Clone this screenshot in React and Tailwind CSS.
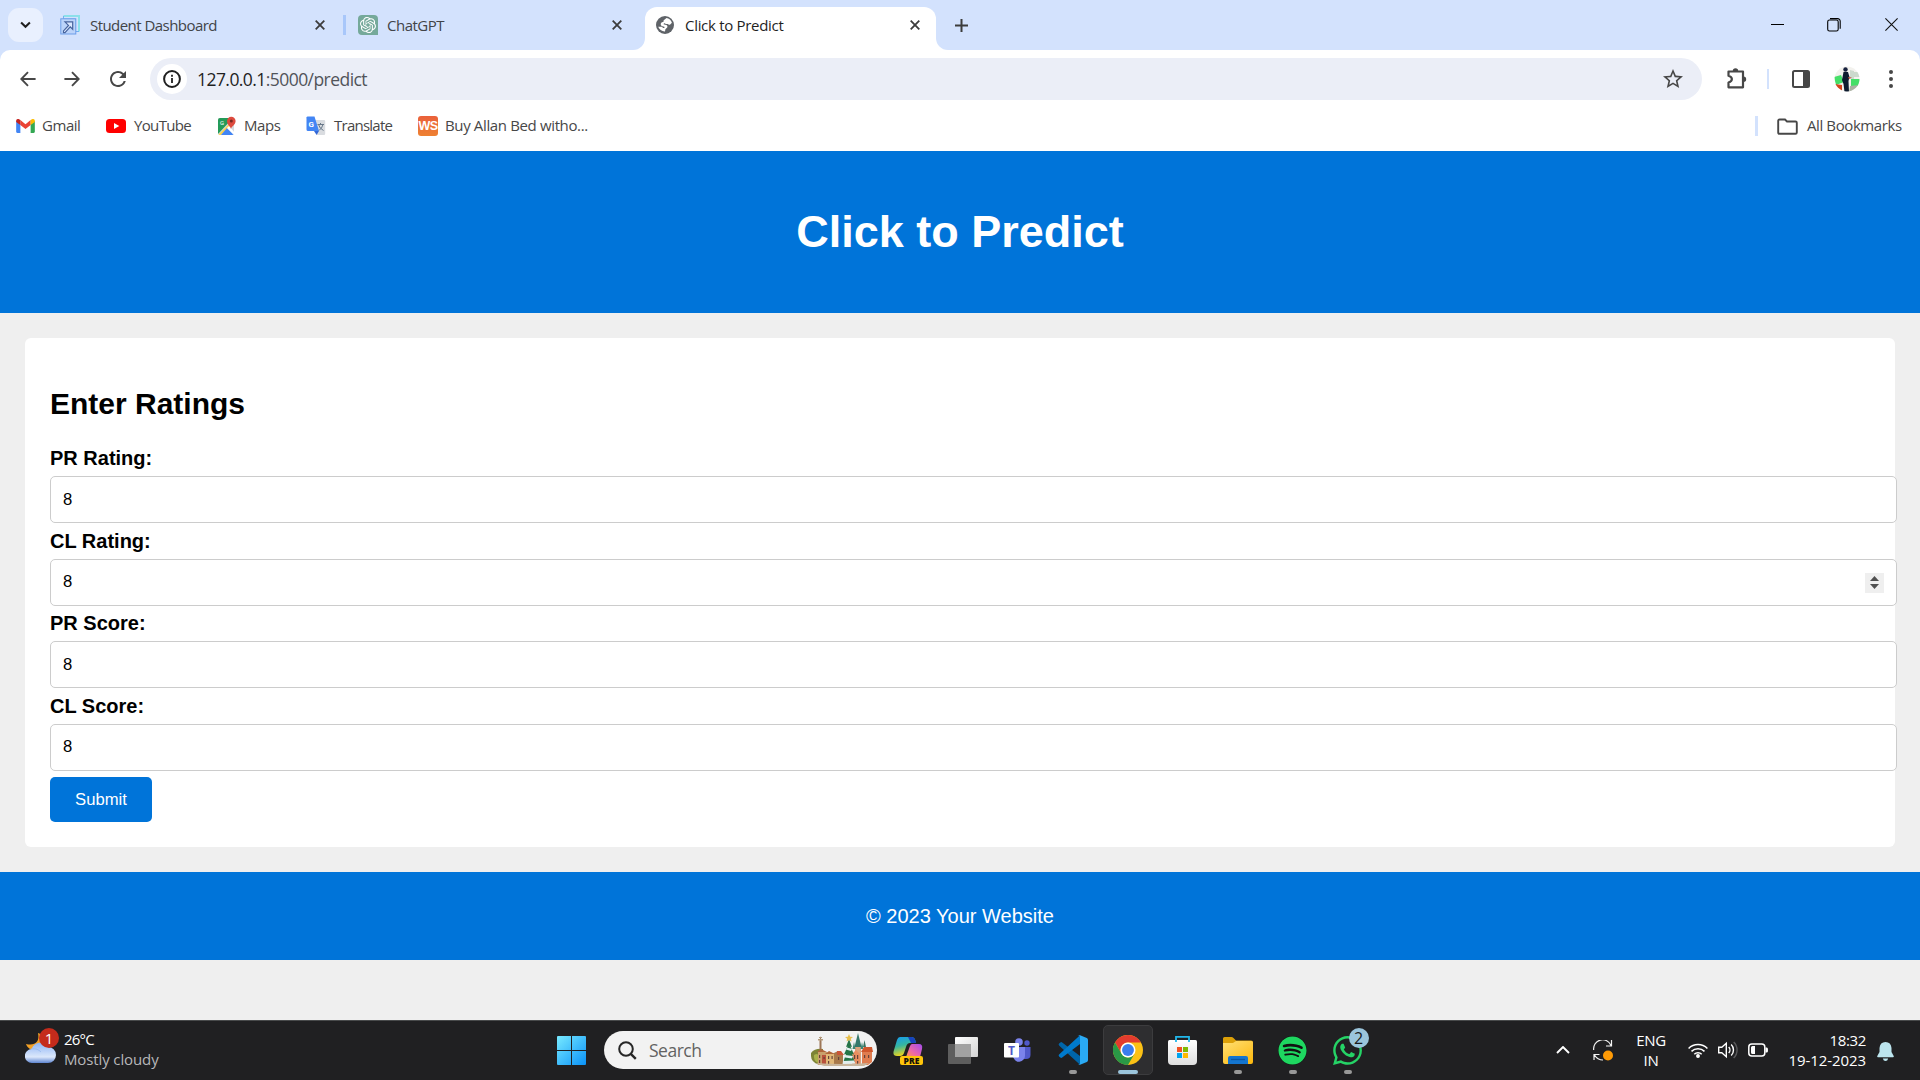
import React from "react";
import { SiOpenai } from "react-icons/si";
import { FaSpotify, FaWhatsapp } from "react-icons/fa";
import { MdStarBorder, MdRefresh } from "react-icons/md";

const ui = "font-['Open_Sans','Noto_Sans',sans-serif] whitespace-nowrap";

const Close = ({ className = "" }) => (
  <svg viewBox="0 0 10 10" className={"h-[10px] w-[10px] shrink-0 " + className}>
    <path d="M.7.7l8.6 8.6M9.3.7L.7 9.3" stroke="#3c3c3c" strokeWidth="1.8" fill="none" />
  </svg>
);

const Globe = () => (
  <svg viewBox="0 0 18 18" className="h-[18px] w-[18px] shrink-0">
    <circle cx="9" cy="9" r="9" fill="#5f6368" />
    <path d="M10.500 2c2.500.4 4.700 2.200 5.400 4.800l-1.700 1.700c-.7.5-1.900.3-2.500-.4l-2-.1c-.3-.8-1.200-1-1.800-.6-.4.300-.2 1 .4 1.100l2 .4c1.300.5 1.500 2 .6 2.900l-1.500 1.400-.4 2.200c-2.900.2-5.900-1.900-6.800-4.700h3.500c.8 0 1.100.6 1 1.300h1.300c.7-.1.800-.9.200-1.200l-2.300-.8c-1.200-.6-1.500-1.900-.8-3 .5-.8 1.400-1 2.300-1l.2-1.500c.3-.8 1.700-1.100 2.900-2.500z" fill="#fff" />
  </svg>
);

function TabStrip() {
  return (
    <div className="flex h-[50px] bg-[#d3e2fd]">
      <div className="ml-2 mt-2 flex h-[34px] w-[35px] items-center justify-center rounded-[11px] bg-[#e9f0fe]">
        <svg viewBox="0 0 12 8" className="h-[8px] w-[11px]"><path d="M1.2 1.2L6 6l4.800-4.800" fill="none" stroke="#1f1f1f" strokeWidth="2.200" /></svg>
      </div>
      <div className="flex w-[300px] items-center pl-[17px]">
        <svg viewBox="0 0 20 20" className="h-5 w-5 shrink-0">
          <path d="M3.500 1h15.500v15.500" fill="none" stroke="#8be0ea" strokeWidth="2" />
          <path d="M3.500 1v3h12v12.500H19" fill="none" stroke="#73aef0" strokeWidth="1" />
          <rect x=".8" y="3.800" width="15" height="15.200" fill="#bcd4fa" stroke="#6c9de9" />
          <path d="M5 6.800h7.700v7.500l-2.500-2.400-5.200 5.700H3.500v-1.700l5-5.500z" fill="#d9e7ff" stroke="#46639d" strokeWidth="1.200" />
        </svg>
        <span className={ui + " ml-[10px] w-[225px] shrink-0 text-[15px] tracking-[-0.55px] text-[#414448]"}>Student Dashboard</span>
        <Close />
      </div>
      <div className="mt-[15px] h-5 w-[3px] bg-[#a8c7fa]" />
      <div className="flex w-[299px] items-center pl-[12px]">
        <span className="flex h-5 w-5 shrink-0 items-center justify-center rounded-[4px] rounded-br-none bg-[#75a99a] text-white"><SiOpenai size={16} /></span>
        <span className={ui + " ml-[9px] w-[225px] shrink-0 text-[15px] tracking-[-0.5px] text-[#414448]"}>ChatGPT</span>
        <Close />
      </div>
      <div className="relative mt-[7px] flex h-[43px] w-[291px] items-center rounded-t-[12px] bg-white pb-[7px] pl-[11px]">
        <span className="absolute -left-3 bottom-0 h-3 w-3 bg-white"><span className="block h-3 w-3 rounded-br-[12px] bg-[#d3e2fd]" /></span>
        <span className="absolute -right-3 bottom-0 h-3 w-3 bg-white"><span className="block h-3 w-3 rounded-bl-[12px] bg-[#d3e2fd]" /></span>
        <Globe />
        <span className={ui + " ml-[11px] w-[225px] shrink-0 text-[15px] tracking-[-0.3px] text-[#1f1f1f]"}>Click to Predict</span>
        <Close />
      </div>
      <svg viewBox="0 0 13 13" className="ml-[19px] mt-[19px] h-[13px] w-[13px]"><path d="M6.500 0v13M0 6.500h13" stroke="#3c3c3c" strokeWidth="2" /></svg>
      <div className="ml-auto mr-[22px] flex h-[49px] items-center">
        <span className="mr-[43px] h-px w-[13px] bg-black" />
        <svg viewBox="0 0 14 14" className="mr-[44px] h-[14px] w-[14px]" fill="none" stroke="black"><rect x=".7" y="2" width="10.500" height="11" rx="1.800" strokeWidth="1.100" /><path d="M3 .6h7.500a2.600 2.600 0 0 1 2.700 2.700v7.500" strokeWidth="1.100" /></svg>
        <svg viewBox="0 0 13 13" className="h-[13px] w-[13px]"><path d="M.4.4l12.200 12.200M12.600.4L.4 12.600" stroke="#111" strokeWidth="1.100" /></svg>
      </div>
    </div>
  );
}

function Toolbar() {
  return (
    <div className="bg-[#d3e2fd]">
      <div className="flex h-[58px] items-center rounded-t-[10px] bg-white">
        <svg viewBox="0 0 16 16" className="ml-[20px] h-[16px] w-[16px]" fill="none" stroke="#474747" strokeWidth="1.900"><path d="M15.600 8H1.500M8 1.200L1.300 8 8 14.800" /></svg>
        <svg viewBox="0 0 16 16" className="ml-[28px] h-[16px] w-[16px]" fill="none" stroke="#474747" strokeWidth="1.900"><path d="M.4 8h14.100M8 1.200L14.700 8 8 14.800" /></svg>
        <MdRefresh size={24} className="ml-[26px] text-[#474747]" />
        <div className="ml-[20px] flex h-[42px] w-[1552px] items-center rounded-full bg-[#ebeef7] pl-[7px] pr-[17px]">
          <span className="flex h-[30px] w-[30px] items-center justify-center rounded-full bg-white">
            <svg viewBox="0 0 18 18" className="h-[18px] w-[18px]"><circle cx="9" cy="9" r="7.900" fill="none" stroke="#1f1f1f" strokeWidth="2" /><path d="M9 8v5M9 4.800v2" stroke="#1f1f1f" strokeWidth="1.800" /></svg>
          </span>
          <span className={ui + " ml-[10px] text-[17.500px] tracking-[-0.56px] text-[#1f1f1f]"}>127.0.0.1<span className="text-[#51545a]">:5000/predict</span></span>
          <MdStarBorder size={24} className="ml-auto text-[#474747]" />
        </div>
        <svg viewBox="0 0 22 22" className="ml-[23px] h-[22px] w-[22px]">
          <path d="M3.500 3.500h14.500v15.800H3.500v-4.700c4.500-1.600 4.500-5.500 0-6.800z" fill="none" stroke="#474747" strokeWidth="2.200" strokeLinejoin="round" />
          <path d="M7.800 3a2.700 2.700 0 0 1 5.400 0M18.500 8.500a2.700 2.700 0 0 1 0 5.400" fill="#474747" />
        </svg>
        <span className="ml-[20px] h-5 w-[2px] bg-[#d3e2fd]" />
        <svg viewBox="0 0 18 18" className="ml-[23px] h-[18px] w-[18px]"><rect x="1" y="1" width="16" height="16" rx="1.500" fill="none" stroke="#474747" strokeWidth="2" /><path d="M11 1h6v16h-6z" fill="#474747" /></svg>
        <svg viewBox="0 0 26 26" className="ml-[24px] h-[26px] w-[26px]">
          <clipPath id="face"><circle cx="13" cy="13" r="12.500" /></clipPath>
          <g clipPath="url(#face)">
            <path d="M0 0h26v26H0z" fill="#f3f2ee" />
            <path d="M0 11l7-2 3 7-8 3zM17 13h9v7h-9z" fill="#45df68" />
            <path d="M16 4l4 1v8h-4zM20 6h6v5h-6z" fill="#ccd9cd" />
            <path d="M1 18l7 1v7H5z" fill="#d4451c" /><path d="M16 20l9-1-4 7h-6z" fill="#aab1a3" />
            <circle cx="11.500" cy="3.500" r="2.200" fill="#17213e" /><path d="M9.500 6h4.500l1.500 5-1 4 .5 11h-4.500l-1-8-1.500-4z" fill="#0d1b2f" /><path d="M14 11l4 0.500-3 1.500z" fill="#c1563e" />
          </g>
        </svg>
        <svg viewBox="0 0 4 18" className="ml-[29px] h-[18px] w-[4px]" fill="#474747"><circle cx="2" cy="2" r="2" /><circle cx="2" cy="9" r="2" /><circle cx="2" cy="16" r="2" /></svg>
      </div>
    </div>
  );
}

function Bookmarks() {
  const label = ui + " relative -top-px text-[15px] text-[#474747]";
  return (
    <div className="flex h-[43px] items-center bg-white pb-[7px]">
      <div className="flex w-[90px] items-center pl-[16px]">
        <svg viewBox="0 0 20 15" className="h-[14px] w-[19px] shrink-0">
          <path d="M0 2v11.700c0 .7.600 1.300 1.300 1.300h3.200V5z" fill="#4285f4" /><path d="M15.500 5v10h3.200c.7 0 1.300-.6 1.300-1.300V2z" fill="#34a853" />
          <path d="M4.500 1.200L10 5.500l5.500-4.300v5.300L10 10.800 4.500 6.500z" fill="#ea4335" /><path d="M0 2C0 0 2.200-.6 3.600.5l.9.700v5.300L0 3.200z" fill="#c5221f" /><path d="M20 2c0-2-2.200-2.600-3.600-1.500l-.9.700v5.300L20 3.200z" fill="#fbbc04" />
        </svg>
        <span className={label + " ml-[7px] tracking-[-0.45px]"}>Gmail</span>
      </div>
      <div className="flex w-[127px] items-center pl-[16px]">
        <svg viewBox="0 0 20 14" className="h-[14px] w-5 shrink-0"><rect width="20" height="14" rx="3.500" fill="red" /><path d="M8 4l5.300 3L8 10z" fill="#fff" /></svg>
        <span className={label + " ml-[8px] tracking-[-0.65px]"}>YouTube</span>
      </div>
      <div className="flex w-[89px] items-center">
        <svg viewBox="0 0 20 20" className="h-5 w-5 shrink-0">
          <clipPath id="map"><rect x="1" y="2" width="16" height="17" rx="2" /></clipPath>
          <g clipPath="url(#map)"><path d="M0 0h20v20H0z" fill="#d6dade" /><path d="M1 2h15L1 18z" fill="#249b58" /><path d="M1 19L16 4v3L4 19z" fill="#fbd24b" /><path d="M4 19l6-7 7 7z" fill="#4285f4" /><path d="M10 12l8 8v-3l-6-7z" fill="#fff" /></g>
          <text x="3" y="8.500" fontSize="6" fontFamily="Roboto" fill="#fff">G</text>
          <path d="M14 13c-.4-3-4-4-4-8a4.300 4.300 0 0 1 8.600 0c0 4-4.200 5-4.600 8z" fill="#dd4b3e" /><circle cx="14.300" cy="5" r="1.500" fill="#782820" />
        </svg>
        <span className={label + " ml-[7px] tracking-[-0.45px]"}>Maps</span>
      </div>
      <div className="flex w-[111px] items-center">
        <svg viewBox="0 0 20 20" className="h-5 w-5 shrink-0">
          <path d="M8 4h10a1.200 1.200 0 0 1 1.200 1.200v12.500A1.300 1.300 0 0 1 18 19H11z" fill="#d9dce0" /><path d="M1.500.5h7L13 15H2A1.500 1.500 0 0 1 .5 13.500v-11A1.500 1.500 0 0 1 1.500.5z" fill="#4285f4" /><path d="M8 15h5l-2.400 4z" fill="#3367d6" />
          <text x="2.500" y="10.500" fontSize="8" fontFamily="Roboto" fontWeight="700" fill="#fff">G</text>
          <path d="M11.500 8.500h6.500M14.500 7v1.500M12.500 8.500q1 4 5 6M17 8.500q-1 4-4 6" fill="none" stroke="#69798a" />
        </svg>
        <span className={label + " ml-[8px] tracking-[-0.75px]"}>Translate</span>
      </div>
      <span className="ml-[1px] flex h-5 w-5 items-center justify-center rounded-[3px] bg-gradient-to-b from-[#ea603a] to-[#ee8132] font-['Liberation_Sans',sans-serif] text-[12.500px] font-bold tracking-[-0.6px] text-white">WS</span>
      <span className={label + " ml-[7px] tracking-[-0.36px]"}>Buy Allan Bed witho...</span>
      <span className="ml-auto h-5 w-[3px] bg-[#d3e2fd]" />
      <svg viewBox="0 0 21 17" className="ml-[19px] h-[17px] w-[21px]"><path d="M2.500 1.500H8l2 2h8.500q1.300 0 1.300 1.300v9.700q0 1.300-1.300 1.300h-16q-1.300 0-1.300-1.300V2.800q0-1.300 1.300-1.300z" fill="none" stroke="#474747" strokeWidth="1.900" /></svg>
      <span className={label + " ml-[9px] mr-[19px] w-[94px] tracking-[-0.4px]"}>All Bookmarks</span>
    </div>
  );
}

function Field({ label, spinner, className = "", inputClass = "" }) {
  return (
    <label className={"flex h-[83px] flex-col " + className}>
      <span className="h-[30px] pt-px text-[20px] font-bold leading-[23px]">{label}</span>
      <span className="flex h-[47px] w-[1847px] shrink-0 items-center rounded-[5px] border border-[#ccc] bg-white pl-[12px] pr-[12px]">
        <input defaultValue="8" className={"min-w-0 flex-1 bg-transparent text-[16.670px] leading-[20px] text-black outline-none " + inputClass} />
        {spinner && (
          <span className="flex h-5 w-[19px] flex-col items-center justify-center gap-[3px] bg-[#efefef]">
            <svg viewBox="0 0 9 5" className="h-[5px] w-[9px]"><path d="M0 5L4.500 0 9 5z" fill="#505050" /></svg>
            <svg viewBox="0 0 9 5" className="h-[5px] w-[9px]"><path d="M0 0l4.500 5L9 0z" fill="#505050" /></svg>
          </span>
        )}
      </span>
    </label>
  );
}

function Page() {
  return (
    <main className="flex h-[869px] flex-col overflow-hidden bg-[#efefef] font-['Liberation_Sans',Arial,sans-serif] text-black">
      <header className="flex h-[162px] shrink-0 items-center justify-center bg-[#0074d9]"><h1 className="text-[45px] font-bold leading-[52px] text-white">Click to Predict</h1></header>
      <section className="m-[25px] h-[509px] shrink-0 rounded-[6px] bg-white px-[25px] pt-[48px]">
        <h2 className="h-[60px] text-[30px] font-bold leading-[35px]">Enter Ratings</h2>
        <Field label="PR Rating:" />
        <Field label="CL Rating:" spinner className="-mb-px" inputClass="pb-[2px]" />
        <Field label="PR Score:" />
        <Field label="CL Score:" inputClass="pb-[2px]" />
        <button className="h-[45px] w-[102px] rounded-[5px] bg-[#0074d9] text-[16.670px] text-white">Submit</button>
      </section>
      <footer className="flex h-[88px] shrink-0 items-center justify-center bg-[#0074d9] text-[20px] text-white">© 2023 Your Website</footer>
    </main>
  );
}

function Cell({ children, dot, active }) {
  return (
    <div className="flex w-[55px] justify-center">
      <div className={"relative mt-[4px] flex h-[50px] w-[50px] items-center justify-center rounded-[5px] " + (active ? "border border-[#3c3c3e] bg-[#2e2e30]" : "")}>
        {children}
        {dot && <span className="absolute bottom-[1px] left-[21px] h-1 w-2 rounded-full bg-[#989898]" />}
        {active && <span className="absolute bottom-0 left-[14px] h-1 w-5 rounded-full bg-[#9bc5dc]" />}
      </div>
    </div>
  );
}

function City() {
  return (
    <svg viewBox="0 0 64 34" className="h-[34px] w-[64px]">
      <path d="M1 20q4-5 12-4v16H9Q1 29 1 23z" fill="#7d8436" /><path d="M4 22q4-3 6 2l-2 6q-5-3-4-8" fill="#abb24b" />
      <path d="M9.500 20V8l1-5 1 5v12z" fill="#9c7657" /><path d="M8 6h5v1.500H8zM9 4h3v1H9z" fill="#b39a7a" />
      <path d="M8 19h9v13H8z" fill="#c9a06c" /><path d="M16 20h9v12h-9z" fill="#e0b777" /><path d="M7 19l4-3 6 3zM15 21l4-3 6 3z" fill="#b0653a" />
      <path d="M24 20l4-2 5 4v11h-9z" fill="#a8794a" /><path d="M27 18h4l3 4h-7z" fill="#c95637" /><path d="M12 22h4v10h-4z" fill="#b9513b" />
      <path d="M45 14h6v18h-6z" fill="#dba27c" /><path d="M44.500 14L48 0l3.500 14z" fill="#34786b" /><path d="M42.500 16l1.500-7 1.500 7zM50.500 16L52 9l1.500 7z" fill="#3d8675" />
      <path d="M52 19h10v10l-4 3h-6z" fill="#df7d50" /><path d="M51 19l3-5h8l1 5z" fill="#d0572c" /><path d="M53 14l1.500-7L56 14z" fill="#397461" />
      <path d="M42 21l4-4 4 4v11h-8z" fill="#e88e60" />
      <path d="M39 6l3 8-1.500-.5 3.500 8-2-.5 3 9H33l3-9-2 .5 3.500-8-1.500.5z" fill="#247447" /><path d="M37 14.500l5 1.500-1 2-5-1.500zM35 22l8 1-1 2.500-7-1zM33 28l11-.5 1.500 3-13 1z" fill="#e3eeee" />
      <path d="M39 1l1.200 2.700 2.800.2-2.200 1.800.8 2.900-2.600-1.600-2.500 1.600.7-2.900L35 3.900l2.800-.2z" fill="#e6be4b" />
      <path d="M9 22h1.200v3H9zM9 27h1.200v3H9zM13.500 24h1.200v2h-1.200zM18 23h1.200v3H18zM21.500 23h1.200v3h-1.200zM18 28h1.200v3H18zM28 24h1.200v3H28zM44 22h1.200v4H44zM47 22h1.200v4H47zM54 22h1.200v3H54zM58 22h1.200v3H58zM47 28h1.200v4H47z" fill="#66433a" />
      <path d="M5 30q27 2 54 0l-5 3H14z" fill="#c9b69d" />
    </svg>
  );
}

function Taskbar() {
  return (
    <div className="flex h-[60px] border-t border-[#484a4b] bg-[#202022]">
      <div className="flex w-[557px] items-start pl-[25px]">
        <div className="relative mt-[6px] h-[38px] w-[34px]">
          <svg viewBox="0 0 34 38" className="h-[38px] w-[34px]">
            <defs><linearGradient id="cl" x2="0" y2="1"><stop stopColor="#8db4f5" /><stop offset=".7" stopColor="#dce8fb" /><stop offset="1" stopColor="#5e85d1" /></linearGradient></defs>
            <path d="M13 6c2 9-3 13-12 11 2 6 9 8 15 5s8-12-3-16z" fill="#f3a126" />
            <path d="M7 36a7 7 0 0 1-.3-14A9 9 0 0 1 23 20a8 8 0 0 1 0 16z" fill="url(#cl)" />
            <path d="M6 22c5-1 8 1 10 3" fill="none" stroke="#9bbcf0" />
          </svg>
          <span className={ui + " absolute left-[14px] top-[1px] flex h-5 w-5 items-center justify-center rounded-full bg-[#c42b1c] text-[15px] leading-none text-white"}>1</span>
        </div>
        <div className={ui + " ml-[5px] mt-[8px] text-[15px] leading-[20px]"}>
          <div className="tracking-[-0.8px] text-white">26°C</div><div className="tracking-[-0.12px] text-[#b7b7b9]">Mostly cloudy</div>
        </div>
      </div>
      <svg viewBox="0 0 29 29" className="mt-[15px] h-[29px] w-[29px]">
        <defs><linearGradient id="win" x2="1" y2="1"><stop stopColor="#78eaff" /><stop offset="1" stopColor="#0a92f8" /></linearGradient></defs>
        <path d="M1 0h13v14H0V1q0-1 1-1zM15 0h13q1 0 1 1v13H15zM0 15h14v14H1q-1 0-1-1zM15 15h14v13q0 1-1 1H15z" fill="url(#win)" />
      </svg>
      <div className="ml-[18px] mt-[10px] flex h-[38px] w-[273px] items-center rounded-full bg-[#f2f2f2] pl-[14px]">
        <svg viewBox="0 0 19 19" className="h-[19px] w-[19px]" fill="none" stroke="#262626" strokeWidth="2"><circle cx="8" cy="8" r="6.800" /><path d="M12.800 12.800l5 5" strokeWidth="2.400" /></svg>
        <span className={ui + " ml-[12px] text-[17.500px] tracking-[-0.5px] text-[#626262]"}>Search</span>
        <span className="ml-auto mr-[3px]"><City /></span>
      </div>
      <div className="ml-[3px] flex">
        <Cell>
          <svg viewBox="0 0 30 30" className="h-[30px] w-[30px]">
            <defs><linearGradient id="ca" x2=".3" y2="1"><stop stopColor="#159cf2" /><stop offset=".5" stopColor="#35b5a1" /><stop offset="1" stopColor="#efd51a" /></linearGradient><linearGradient id="cb" x1="1" x2="0" y2="1"><stop stopColor="#a44bef" /><stop offset=".6" stopColor="#ee68a6" /><stop offset="1" stopColor="#ff9b45" /></linearGradient></defs>
            <path d="M7 2h12q3 0 4 6h-6q-3 0-4 4l-2 6q-1 3-4 3H4q-5 0-3-6L4 5q1-3 3-3z" fill="url(#ca)" /><path d="M15 2h4q3 0 4 6h-5z" fill="#1743bd" />
            <path d="M19 9h7q4 0 3 5l-2 8H13l4-11q1-2 2-2z" fill="url(#cb)" />
            <rect x="7" y="21" width="23" height="9" rx="2" fill="#ffc50a" /><text x="18.500" y="28.500" textAnchor="middle" fontFamily="Open Sans" fontWeight="800" fontSize="8.500" fill="#16120a">PRE</text>
          </svg>
        </Cell>
        <Cell>
          <svg viewBox="0 0 30 29" className="h-[29px] w-[30px]"><defs><linearGradient id="tv" x2="1" y2="1"><stop stopColor="#fff" /><stop offset="1" stopColor="#d4d4d4" /></linearGradient></defs><rect y="8" width="23" height="20" rx="1" fill="#5e5e5e" /><rect x="7" y="1" width="23" height="20" rx="1" fill="url(#tv)" /><path d="M7 8h16v13H7z" fill="#a2a2a2" /></svg>
        </Cell>
        <Cell>
          <svg viewBox="0 0 27 24" className="h-[24px] w-[27px]"><circle cx="15" cy="4" r="3.800" fill="#7b83eb" /><circle cx="23" cy="5" r="2.700" fill="#5059c9" /><path d="M17 9h9.500v8q0 4-4.500 4h-5z" fill="#5059c9" /><path d="M9 9h12v8a6 6.300 0 0 1-12 1z" fill="#7b83eb" /><rect y="5" width="15" height="14.500" rx="1" fill="#fff" /><text x="7.500" y="16.500" textAnchor="middle" fontFamily="Open Sans" fontWeight="700" fontSize="12" fill="#5059c9">T</text></svg>
        </Cell>
        <Cell dot>
          <svg viewBox="0 0 30 30" className="h-[30px] w-[30px]"><path d="M1.300 10.800L22 29.800V21L4.200 7.400q-1-.7-1.900.1l-1.200 1.100q-1.100 1.100.2 2.200z" fill="#0065a9" /><path d="M1.300 19.200L22 .2V9L4.200 22.600q-1 .7-1.900-.1l-1.200-1.100q-1.100-1.100.2-2.200z" fill="#007acc" /><path d="M21.500 0l7.300 3q1.200.6 1.200 2v20q0 1.400-1.200 2l-7.300 3q-1 .2-1.900-.5 2 1 2.400-1V1.500q-.4-2-2.400-1 .9-.7 1.900-.5z" fill="#2aaaf4" /></svg>
        </Cell>
        <Cell active>
          <svg viewBox="0 0 48 48" className="h-[30px] w-[30px]"><circle cx="24" cy="24" r="24" fill="#fbc116" /><path d="M3.215 12A24 24 0 0 1 44.785 12H24A12 12 0 0 0 13.610 30z" fill="#e33b2e" /><path d="M3.215 12A24 24 0 0 0 24 48l10.390-18A12 12 0 0 1 13.610 30z" fill="#2a9846" /><circle cx="24" cy="24" r="12" fill="#fff" /><circle cx="24" cy="24" r="9.500" fill="#3b7ded" /></svg>
        </Cell>
        <Cell>
          <svg viewBox="0 0 29 29" className="h-[29px] w-[29px]"><defs><linearGradient id="sg" x2="0" y2="1"><stop stopColor="#fff" /><stop offset="1" stopColor="#dedede" /></linearGradient></defs><path d="M0 5.500Q0 4 1.500 4h26Q29 4 29 5.500V25q0 4-4 4H4q-4 0-4-4z" fill="url(#sg)" /><path d="M8 6V.9h13V6" fill="none" stroke="#21b8ec" strokeWidth="1.800" /><path d="M9 11h5v5H9z" fill="#f25022" /><path d="M15 11h5v5h-5z" fill="#7fba00" /><path d="M9 17h5v5H9z" fill="#00a4ef" /><path d="M15 17h5v5h-5z" fill="#ffb900" /></svg>
        </Cell>
        <Cell dot>
          <svg viewBox="0 0 30 27" className="mt-[1px] h-[27px] w-[30px]"><defs><linearGradient id="fg" x2=".8" y2="1"><stop stopColor="#ffe075" /><stop offset="1" stopColor="#fdba13" /></linearGradient></defs><path d="M0 1.500Q0 0 1.500 0h7q1 0 2 1l2.500 2.500H28q2 0 2 2V9H0z" fill="#dca008" /><path d="M0 6h10l3-2h15.500q1.500 0 1.500 1.500V25q0 2-2 2H2q-2 0-2-2z" fill="url(#fg)" /><path d="M5 27v-6q0-2 2-2h16q2 0 2 2v6z" fill="#1475cf" /><path d="M8 22.500h14" stroke="#0b57a4" strokeWidth="1.300" /></svg>
        </Cell>
        <Cell dot>
          <span className="flex h-[29px] w-[29px] items-center justify-center rounded-full bg-[#121212]"><FaSpotify size={29} color="#1ed760" /></span>
        </Cell>
        <Cell dot>
          <FaWhatsapp size={33} color="#25d366" />
          <span className={ui + " absolute left-[26px] top-[3px] flex h-5 w-5 items-center justify-center rounded-full bg-[#9bc5dc] text-[16px] text-[#1a1a1a]"}>2</span>
        </Cell>
      </div>
      <div className="ml-auto flex h-[58px] items-center text-white">
        <svg viewBox="0 0 14 8" className="mr-[23px] h-[8px] w-[14px]"><path d="M1 7l6-6 6 6" fill="none" stroke="#fff" strokeWidth="1.900" /></svg>
        <svg viewBox="0 0 20 21" className="mr-[23px] h-[21px] w-[20px]" fill="none" stroke="#f3f3f3" strokeWidth="1.200"><path d="M.7 10A9 9 0 0 1 18 5.500M18.500 0v6H13M1 20v-5.500h5.500M1.500 15q3 5 8.500 5" /><circle cx="15" cy="15.500" r="5" fill="#ff9b06" stroke="none" /></svg>
        <div className={ui + " mr-[22px] w-[30px] text-center text-[15px] leading-[20px] tracking-[-0.35px]"}>ENG<br />IN</div>
        <svg viewBox="0 0 20 15" className="mr-[10px] h-[15px] w-[20px]" fill="none" stroke="#fff" strokeWidth="1.500"><path d="M.6 5.500a13.300 13.300 0 0 1 18.800 0M3.500 8.400a9.200 9.200 0 0 1 13 0M6.300 11.200a5.200 5.200 0 0 1 7.400 0" /><circle cx="10" cy="13" r="1.200" fill="#fff" /></svg>
        <svg viewBox="0 0 20 18" className="mr-[10px] h-[18px] w-[20px]" fill="none" stroke="#fff" strokeWidth="1.400"><path d="M.7 6.200h3.100L8.300 2.300v13.400l-4.500-3.900H.7z" /><path d="M10.700 6a4.300 4.300 0 0 1 0 6M13.200 3.500a7.800 7.800 0 0 1 0 11" /><path d="M15.700 1a11.200 11.200 0 0 1 0 16" stroke="#59595b" /></svg>
        <svg viewBox="0 0 20 14" className="mr-[20px] h-[14px] w-[20px]"><rect x=".8" y="1" width="16" height="12" rx="3" fill="none" stroke="#fff" strokeWidth="1.500" /><path d="M3 4.500Q3 3 4.500 3H7v8H4.500Q3 11 3 9.500zM17.500 4.500H19q1 0 1 2.500t-1 2.500h-1.500z" fill="#fff" /></svg>
        <div className={ui + " mr-[11px] w-[78px] text-right text-[15px] leading-[20px] tracking-[-0.08px]"}><span className="tracking-[-0.35px]">18:32</span><br />19-12-2023</div>
        <svg viewBox="0 0 17 19" className="mr-[26px] mt-[2px] h-[19px] w-[17px]" fill="#bce5ee"><path d="M8.500 0Q14 0 14.500 6v4l2.200 4q.4 1.300-.7 1.300H1Q-.1 15.300.3 14l2.200-4V6Q3 0 8.500 0zM5.800 16.500h5.400Q10.500 19 8.500 19t-2.700-2.500z" /></svg>
      </div>
    </div>
  );
}

export default function App() {
  return (
    <div className="h-[1080px] w-[1920px] overflow-hidden">
      <TabStrip />
      <Toolbar />
      <Bookmarks />
      <Page />
      <Taskbar />
    </div>
  );
}
